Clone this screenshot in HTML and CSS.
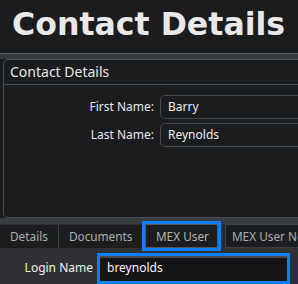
FILE: index.html
```html
<!DOCTYPE html>
<html lang="en">
<head>
  <meta charset="UTF-8">
  <title>Contact Details</title>
  <link rel="stylesheet" href="styles.css">
</head>
<body>
  <h1 class="title">Contact Details</h1>
  <div class="band"></div>

  <section class="panel">
    <div class="panel-head">Contact Details</div>
    <div class="form">
      <div class="row"><label>First Name:</label><div class="field">Barry</div></div>
      <div class="row"><label>Last Name:</label><div class="field">Reynolds</div></div>
    </div>
  </section>

  <div class="band band-low"></div>

  <nav class="tabs">
    <span class="tab tab-first">Details</span>
    <span class="tab tab-docs">Documents</span>
    <span class="tab active">MEX User</span>
    <span class="tab tab-notes">MEX User Notes</span>
  </nav>

  <div class="login-row">
    <label>Login Name</label>
    <div class="login-field">breynolds</div>
  </div>
</body>
</html>
```

FILE: styles.css
```css
body {
  margin: 0;
  background: #1b1c1e;
  font-family: "Noto Sans", Arial, sans-serif;
  width: 298px;
  height: 284px;
  overflow: hidden;
}
.title {
  margin: 0;
  box-sizing: border-box;
  height: 53px;
  padding: 6px 0 0 12px;
  font: bold 31.6px/36px "DejaVu Sans", Verdana, sans-serif;
  color: #e9e9e9;
  white-space: nowrap;
}
.band {
  height: 5px;
  border-top: 1px solid #585c60;
  background: #363a3e;
}
.band-low {
  height: 6px;
  border-top: 0;
  background: #393d41;
}
.panel {
  box-sizing: border-box;
  height: 159px;
  margin: 0 -8px 0 3px;
  border: 1px solid #4b4f53;
  border-radius: 5px;
  background: #1b1c1e;
}
.panel-head {
  height: 24px;
  line-height: 24px;
  padding-left: 6px;
  border-bottom: 1px solid #4b4f53;
  font-size: 14px;
  color: #e6e6e6;
}
.form {
  padding-top: 10px;
  display: flex;
  flex-direction: column;
  gap: 4px;
}
.row {
  display: grid;
  grid-template-columns: 150px 1fr;
  gap: 6px;
}
.row label {
  text-align: right;
  font-size: 12px;
  line-height: 24px;
  color: #e8e8e8;
}
.field {
  box-sizing: border-box;
  height: 24px;
  line-height: 22px;
  padding-left: 7px;
  border: 1px solid #46494c;
  border-radius: 5px;
  font-size: 12px;
  color: #eeeeee;
}
.tabs {
  display: flex;
  height: 24px;
  background: #26282b;
  font-size: 11.8px;
  white-space: nowrap;
}
.tab {
  box-sizing: border-box;
  height: 24px;
  line-height: 22px;
  padding: 0 10px;
  background: #1c1d1f;
  color: #adadad;
  border-top: 1px solid #2c2e31;
}
.tab-first { width: 59px; border-right: 1px solid #3c3f42; }
.tab-docs { width: 83px; }
.tab.active {
  margin-left: 3px;
  width: 73px;
  border: 1px solid #56595c;
  outline: 3px solid #0a80ff;
  color: #b4b4b4;
}
.tab-notes {
  margin-left: 7px;
  border: 1px solid #3c3f42;
  padding-left: 6px;
}
.login-row {
  display: grid;
  grid-template-columns: 93px 193px;
  gap: 4px;
  height: 36px;
  padding-top: 5px;
  box-sizing: border-box;
  background: #2e3033;
}
.login-row label {
  text-align: right;
  font-size: 12px;
  line-height: 30px;
  color: #f2f2f2;
}
.login-field {
  box-sizing: border-box;
  height: 31px;
  padding-left: 7px;
  line-height: 24px;
  border: 3px solid #0a80ff;
  background: #141517;
  box-shadow: inset 0 2px 1px #4a4c4f;
  font-size: 12px;
  color: #f4f4f4;
}
```
